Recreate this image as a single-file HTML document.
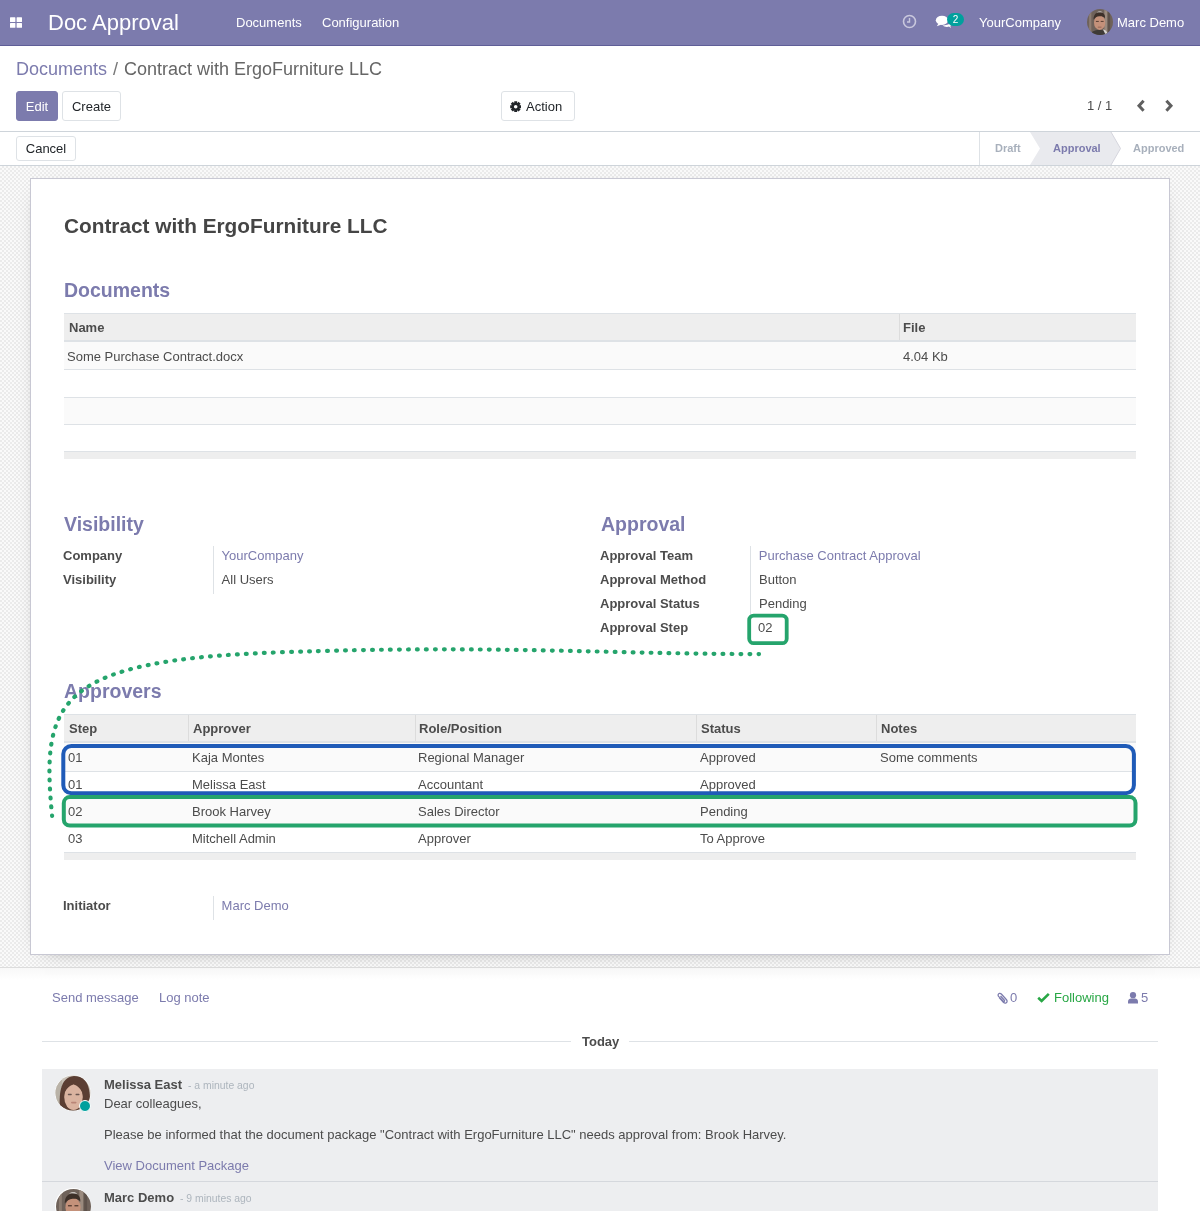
<!DOCTYPE html>
<html><head><meta charset="utf-8">
<style>
*{box-sizing:border-box;margin:0;padding:0}
html,body{width:1200px;height:1211px;overflow:hidden;background:#fff}
body{font-family:"Liberation Sans",sans-serif;font-size:13px;color:#4c4c4c;position:relative}
.abs{position:absolute;white-space:nowrap}
#nav{position:absolute;left:0;top:0;width:1200px;height:46px;background:#7c7bad;border-bottom:1px solid #5f5e97}
#nav .t{position:absolute;color:#fff;white-space:nowrap}
.btn{position:absolute;border:1px solid #dee2e6;border-radius:3px;background:#fff;color:#212529;font-size:13px;text-align:center;white-space:nowrap}
.sep{position:absolute;height:1px;background:#d9d9e1}
#bg{position:absolute;left:0;top:166px;width:1200px;height:801px;
background-color:#fafafa;
background-image:linear-gradient(45deg,#ebebeb 25%,transparent 25%,transparent 75%,#ebebeb 75%),linear-gradient(45deg,#ebebeb 25%,transparent 25%,transparent 75%,#ebebeb 75%);
background-size:4px 4px;background-position:0 0,2px 2px}
#sheet{position:absolute;left:30px;top:178px;width:1140px;height:777px;background:#fff;border:1px solid #c8c8d3;box-shadow:0 5px 20px -15px rgba(0,0,0,0.7)}
.h2{position:absolute;font-size:19.5px;font-weight:bold;color:#7c7bad;white-space:nowrap}
.lbl{position:absolute;font-weight:bold;color:#4c4c4c;white-space:nowrap}
.val{position:absolute;white-space:nowrap}
.link{color:#7c7bad}
.vline{position:absolute;width:1px;background:#dee2e6}
.tbl{position:absolute}
.hrow{position:absolute;left:0;height:29px;background:#eee;border-top:1px solid #dee2e6;border-bottom:2px solid #dee2e6}
.row{position:absolute;left:0;border-bottom:1px solid #dee2e6}
.cell{position:absolute;white-space:nowrap}
.th{position:absolute;font-weight:bold;white-space:nowrap;color:#4c4c4c}
</style></head><body>
<div id="root" style="position:absolute;left:0;top:0;width:1200px;height:1211px;will-change:transform">

<div id="nav">
  <svg class="abs" style="left:10px;top:16.5px" width="12" height="11" viewBox="0 0 12 11"><rect x="0" y="0.3" width="5.4" height="4.7" rx="0.5" fill="#fff"/><rect x="6.6" y="0.3" width="5.4" height="4.7" rx="0.5" fill="#fff"/><rect x="0" y="6" width="5.4" height="4.7" rx="0.5" fill="#fff"/><rect x="6.6" y="6" width="5.4" height="4.7" rx="0.5" fill="#fff"/></svg>
  <div class="t" style="left:48px;top:10px;font-size:22px">Doc Approval</div>
  <div class="t" style="left:236px;top:15px">Documents</div>
  <div class="t" style="left:322px;top:15px">Configuration</div>
  <svg class="abs" style="left:902px;top:14px" width="15" height="15" viewBox="0 0 15 15"><circle cx="7.5" cy="7.5" r="6" fill="none" stroke="#c9c8dd" stroke-width="1.6"/><path d="M7.5 4v4h-2.5" fill="none" stroke="#c9c8dd" stroke-width="1.4"/></svg>
  <svg class="abs" style="left:935px;top:14px" width="18" height="16" viewBox="0 0 18 16"><ellipse cx="7" cy="6.3" rx="6.2" ry="4.6" fill="#fff"/><path d="M3.5 9.5 L1.8 12.3 L6.5 10.5z" fill="#fff"/><path d="M7.5 11.6 C9 12.8 12 13.2 14 12.6 L16 14 L15.3 12 C16.5 11.2 16.8 10 16.5 9 C14 10.5 10.5 11.3 7.5 11.6Z" fill="#fff"/></svg>
  <div class="abs" style="left:947px;top:12.5px;width:17px;height:13.5px;border-radius:7px;background:#00a09d;color:#fff;font-size:10px;text-align:center;line-height:13.5px">2</div>
  <div class="t" style="left:979px;top:15px">YourCompany</div>
  <div class="abs" style="left:1087px;top:9px;width:26px;height:26px"><svg viewBox="0 0 36 36" width="100%" height="100%"><defs><clipPath id="cl1"><circle cx="18" cy="18" r="18"/></clipPath></defs><g clip-path="url(#cl1)">
<rect width="36" height="36" fill="#6f625a"/><rect x="24" y="0" width="4" height="36" fill="#9a8a7e"/><rect x="29" y="0" width="3" height="36" fill="#5e524b"/><rect x="3" y="0" width="3" height="36" fill="#8c7d72"/>
<path d="M5 36 C6 31 10 29 17 29 C24 29 28 31 30 36Z" fill="#3e3a36"/><path d="M22 28 L26 36 L29 36 C28 31 26 29 22 28Z" fill="#d8d6d2"/>
<ellipse cx="17.5" cy="19" rx="7.8" ry="10" fill="#c4917a"/>
<path d="M9 15 C9 7 13 4.5 17.5 4.5 C22 4.5 25.5 7 25 13 C23 10 20 9.8 17 10 C13.5 10.3 11 12 9 15Z" fill="#3d3029"/>
<path d="M13.5 4.8 C15.5 2.8 20.5 2.8 22 5 C19 4.2 16 4.2 13.5 4.8Z" fill="#e2e0de"/>
<rect x="12.3" y="16.5" width="4" height="1.4" fill="#5a4035"/><rect x="19" y="16.5" width="4" height="1.4" fill="#5a4035"/><rect x="15" y="24.5" width="5" height="1.2" fill="#8e5f50"/>
</g></svg></div>
  <div class="t" style="left:1117px;top:15px">Marc Demo</div>
</div>

<!-- control panel -->
<div class="abs" style="left:16px;top:59px;font-size:18px;color:#7c7bad">Documents</div>
<div class="abs" style="left:113px;top:59px;font-size:18px;color:#777">/</div>
<div class="abs" style="left:124px;top:59px;font-size:18px;color:#666">Contract with ErgoFurniture LLC</div>
<div class="btn" style="left:16px;top:91px;width:42px;height:30px;line-height:30px;background:#7c7bad;border-color:#7c7bad;color:#fff">Edit</div>
<div class="btn" style="left:62px;top:91px;width:59px;height:30px;line-height:30px">Create</div>
<div class="btn" style="left:501px;top:91px;width:74px;height:30px"></div>
<svg class="abs" style="left:510px;top:100.8px" width="11.4" height="11.4" viewBox="0 0 12 12"><path fill-rule="evenodd" d="M10.12 4.45 L11.80 4.46 L11.80 7.54 L10.12 7.55 L10.01 7.82 L11.19 9.01 L9.01 11.19 L7.82 10.01 L7.55 10.12 L7.54 11.80 L4.46 11.80 L4.45 10.12 L4.18 10.01 L2.99 11.19 L0.81 9.01 L1.99 7.82 L1.88 7.55 L0.20 7.54 L0.20 4.46 L1.88 4.45 L1.99 4.18 L0.81 2.99 L2.99 0.81 L4.18 1.99 L4.45 1.88 L4.46 0.20 L7.54 0.20 L7.55 1.88 L7.82 1.99 L9.01 0.81 L11.19 2.99 L10.01 4.18ZM7.9 6 A1.9 1.9 0 1 0 4.1 6 A1.9 1.9 0 1 0 7.9 6Z" fill="#212529"/></svg>
<div class="abs" style="left:526px;top:99px;color:#212529">Action</div>
<div class="abs" style="left:1087px;top:98px;color:#4c4c4c">1 / 1</div>
<svg class="abs" style="left:1136px;top:99px" width="10" height="14" viewBox="0 0 10 14"><path d="M7.6 1.8 L3 6.8 L7.6 11.8" fill="none" stroke="#5f5f5f" stroke-width="3"/></svg>
<svg class="abs" style="left:1164px;top:99px" width="10" height="14" viewBox="0 0 10 14"><path d="M2.4 1.8 L7 6.8 L2.4 11.8" fill="none" stroke="#5f5f5f" stroke-width="3"/></svg>
<div class="sep" style="left:0;top:131px;width:1200px;background:#ced4da"></div>

<!-- statusbar -->
<div class="btn" style="left:16px;top:136px;width:60px;height:25px;line-height:24px">Cancel</div>
<div class="abs" style="left:979px;top:132px;width:1px;height:33px;background:#dee2e6"></div>
<svg class="abs" style="left:1030px;top:132px" width="91" height="33" viewBox="0 0 91 33"><path d="M0 0 H81 L90.5 16.5 L81 33 H0 L10 16.5z" fill="#e9eaee"/><path d="M81 0 L90.5 16.5 L81 33" fill="none" stroke="#d5d5dd" stroke-width="1"/></svg>
<div class="abs" style="left:995px;top:142px;font-size:11px;font-weight:bold;color:#a8b0bc">Draft</div>
<div class="abs" style="left:1053px;top:142px;font-size:11px;font-weight:bold;color:#7c7bad">Approval</div>
<div class="abs" style="left:1133px;top:142px;font-size:11px;font-weight:bold;color:#a8b0bc">Approved</div>

<div id="bg"></div>
<div class="sep" style="left:0;top:165px;width:1200px;background:#ced4da"></div>
<div class="sep" style="left:0;top:967px;width:1200px;background:#dcdcdc"></div>
<div class="abs" style="left:0;top:968px;width:1200px;height:12px;background:linear-gradient(#f8f8f8,#fff)"></div>

<div id="sheet"></div>
<!-- sheet content -->
<div class="abs" style="left:64px;top:214px;font-size:20.8px;font-weight:bold;color:#454545">Contract with ErgoFurniture LLC</div>
<div class="h2" style="left:64px;top:279px">Documents</div>

<!-- documents table -->
<div class="abs" style="left:64px;top:313px;width:1072px;height:29px;background:#eee;border-top:1px solid #dee2e6;border-bottom:2px solid #dee2e6"></div>
<div class="abs" style="left:899px;top:314px;width:1px;height:26px;background:#dcdcdc"></div>
<div class="th" style="left:69px;top:320px">Name</div>
<div class="th" style="left:903px;top:320px">File</div>
<div class="abs" style="left:64px;top:342px;width:1072px;height:28px;background:#fafafa;border-bottom:1px solid #dee2e6"></div>
<div class="cell" style="left:67px;top:349px">Some Purchase Contract.docx</div>
<div class="cell" style="left:903px;top:349px">4.04 Kb</div>
<div class="abs" style="left:64px;top:370px;width:1072px;height:28px;background:#fff;border-bottom:1px solid #dee2e6"></div>
<div class="abs" style="left:64px;top:398px;width:1072px;height:27px;background:#fafafa;border-bottom:1px solid #dee2e6"></div>
<div class="abs" style="left:64px;top:425px;width:1072px;height:27px;background:#fff;border-bottom:1px solid #dee2e6"></div>
<div class="abs" style="left:64px;top:452px;width:1072px;height:7px;background:#eee"></div>

<!-- visibility -->
<div class="h2" style="left:64px;top:513px">Visibility</div>
<div class="lbl" style="left:63px;top:548px">Company</div>
<div class="lbl" style="left:63px;top:572px">Visibility</div>
<div class="vline" style="left:213px;top:546px;height:48px"></div>
<div class="val link" style="left:221.6px;top:548px">YourCompany</div>
<div class="val" style="left:221.6px;top:572px">All Users</div>

<!-- approval -->
<div class="h2" style="left:601px;top:513px">Approval</div>
<div class="lbl" style="left:600px;top:548px">Approval Team</div>
<div class="lbl" style="left:600px;top:572px">Approval Method</div>
<div class="lbl" style="left:600px;top:596px">Approval Status</div>
<div class="lbl" style="left:600px;top:620px">Approval Step</div>
<div class="vline" style="left:750px;top:546px;height:96px"></div>
<div class="val link" style="left:758.8px;top:548px">Purchase Contract Approval</div>
<div class="val" style="left:759px;top:572px">Button</div>
<div class="val" style="left:759px;top:596px">Pending</div>
<div class="val" style="left:758px;top:620px">02</div>

<!-- approvers -->
<div class="h2" style="left:64px;top:680px">Approvers</div>
<div class="abs" style="left:64px;top:714px;width:1072px;height:29px;background:#eee;border-top:1px solid #dee2e6;border-bottom:2px solid #dee2e6"></div>
<div class="abs" style="left:188px;top:715px;width:1px;height:26px;background:#dcdcdc"></div>
<div class="abs" style="left:415px;top:715px;width:1px;height:26px;background:#dcdcdc"></div>
<div class="abs" style="left:696px;top:715px;width:1px;height:26px;background:#dcdcdc"></div>
<div class="abs" style="left:876px;top:715px;width:1px;height:26px;background:#dcdcdc"></div>
<div class="th" style="left:69px;top:721px">Step</div>
<div class="th" style="left:193px;top:721px">Approver</div>
<div class="th" style="left:419px;top:721px">Role/Position</div>
<div class="th" style="left:701px;top:721px">Status</div>
<div class="th" style="left:881px;top:721px">Notes</div>
<div class="abs" style="left:64px;top:743px;width:1072px;height:29px;background:#fafafa;border-bottom:1px solid #dee2e6"></div>
<div class="abs" style="left:64px;top:772px;width:1072px;height:26px;background:#fff;border-bottom:1px solid #dee2e6"></div>
<div class="abs" style="left:64px;top:798px;width:1072px;height:27px;background:#fafafa;border-bottom:1px solid #dee2e6"></div>
<div class="abs" style="left:64px;top:825px;width:1072px;height:28px;background:#fff;border-bottom:1px solid #dee2e6"></div>
<div class="abs" style="left:64px;top:853px;width:1072px;height:7px;background:#eee"></div>
<div class="cell" style="left:68px;top:750px">01</div><div class="cell" style="left:192px;top:750px">Kaja Montes</div><div class="cell" style="left:418px;top:750px">Regional Manager</div><div class="cell" style="left:700px;top:750px">Approved</div><div class="cell" style="left:880px;top:750px">Some comments</div>
<div class="cell" style="left:68px;top:777px">01</div><div class="cell" style="left:192px;top:777px">Melissa East</div><div class="cell" style="left:418px;top:777px">Accountant</div><div class="cell" style="left:700px;top:777px">Approved</div>
<div class="cell" style="left:68px;top:804px">02</div><div class="cell" style="left:192px;top:804px">Brook Harvey</div><div class="cell" style="left:418px;top:804px">Sales Director</div><div class="cell" style="left:700px;top:804px">Pending</div>
<div class="cell" style="left:68px;top:831px">03</div><div class="cell" style="left:192px;top:831px">Mitchell Admin</div><div class="cell" style="left:418px;top:831px">Approver</div><div class="cell" style="left:700px;top:831px">To Approve</div>

<!-- initiator -->
<div class="lbl" style="left:63px;top:898px">Initiator</div>
<div class="vline" style="left:213px;top:896px;height:24px"></div>
<div class="val link" style="left:221.6px;top:898px">Marc Demo</div>

<!-- annotations -->
<svg class="abs" style="left:0;top:0" width="1200" height="1211" viewBox="0 0 1200 1211">
  <rect x="63.3" y="746" width="1070.6" height="47.2" rx="8" fill="none" stroke="#1f5bb8" stroke-width="4"/>
  <rect x="63.8" y="797.1" width="1071.7" height="28.4" rx="6" fill="none" stroke="#25a46c" stroke-width="4"/>
  <rect x="749.2" y="615.6" width="37.5" height="27.6" rx="4.5" fill="none" stroke="#25a46c" stroke-width="3.8"/>
  <path d="M759.0 654.1 C603.9 653.9 491.2 644.8 279.8 652.3 C56.1 660.1 40.9 701.0 52.1 815.9" fill="none" stroke="#25a46c" stroke-width="4.2" stroke-linecap="round" stroke-dasharray="0.8 8.1948" stroke-dashoffset="0.4"/>
</svg>

<!-- chatter -->
<div class="abs" style="left:52px;top:990px;color:#7c7bad">Send message</div>
<div class="abs" style="left:159px;top:990px;color:#7c7bad">Log note</div>
<svg class="abs" style="left:996px;top:992px" width="12" height="13" viewBox="0 0 12 13"><g transform="translate(12,0) scale(-1,1)"><path d="M8.8 5.6 L4.6 10.2 C3.1 11.8 0.9 11.2 0.9 9.3 C0.9 8.5 1.3 7.9 1.9 7.3 L6.7 2 C7.7 1 9.6 1.3 9.9 2.8 C10 3.5 9.7 4.1 9.2 4.6 L4.8 9.3 C4.3 9.8 3.4 9.6 3.4 8.8 C3.4 8.5 3.6 8.2 3.8 8 L7.5 4" fill="none" stroke="#7c7bad" stroke-width="1.3"/></g></svg>
<div class="abs" style="left:1010px;top:990px;color:#7c7bad">0</div>
<svg class="abs" style="left:1037px;top:991.5px" width="13" height="11" viewBox="0 0 13 11"><path d="M1.2 5.8 L4.6 9 L11.8 1.8" fill="none" stroke="#28a745" stroke-width="2.6"/></svg>
<div class="abs" style="left:1054px;top:990px;color:#28a745">Following</div>
<svg class="abs" style="left:1128px;top:992px" width="10" height="12" viewBox="0 0 10 12"><circle cx="5" cy="3.2" r="3.1" fill="#7c7bad"/><path d="M0 11.5 V9.6 C0 7.5 1.5 6.6 3 6.6 H7 C8.5 6.6 10 7.5 10 9.6 V11.5z" fill="#7c7bad"/></svg>
<div class="abs" style="left:1141px;top:990px;color:#7c7bad">5</div>

<div class="abs" style="left:42px;top:1041px;width:529px;height:1px;background:#dee2e6"></div>
<div class="abs" style="left:582px;top:1034px;font-weight:bold;color:#4c4c4c">Today</div>
<div class="abs" style="left:629px;top:1041px;width:529px;height:1px;background:#dee2e6"></div>

<div class="abs" style="left:42px;top:1069px;width:1116px;height:142px;background:#edeef0"></div>
<div class="abs" style="left:42px;top:1181px;width:1116px;height:1px;background:#d5d8dd"></div>
<div class="abs" style="left:55px;top:1075px;width:36px;height:36px"><svg viewBox="0 0 36 36" width="100%" height="100%"><defs><clipPath id="clm"><circle cx="18" cy="18" r="17.5"/></clipPath></defs><circle cx="18" cy="18" r="18" fill="#fff"/><g clip-path="url(#clm)">
<rect width="36" height="36" fill="#c9c2b8"/><rect x="0" y="0" width="7" height="36" fill="#b9b2a7"/>
<path d="M5 36 C4 22 4 2 19 1 C33 1 35 14 35 26 L35 36Z" fill="#5b3e33"/>
<ellipse cx="18.5" cy="22" rx="9.3" ry="13" fill="#dab3a0"/>
<path d="M8.5 20 C9 10 13 6.5 18 6 L18.6 9.5 C14 10.5 11 14 8.5 20Z" fill="#5b3e33"/><path d="M28.5 20 C28 10 24 6.5 19.2 6 L18.6 9.5 C23 10.5 26 14 28.5 20Z" fill="#5b3e33"/>
<path d="M5 36 L10 36 C9 30 8.5 24 9.2 18 L6 18Z" fill="#5b3e33"/><path d="M31 31 L26 31 C28 27 28.5 22 27.8 18 L31 18Z" fill="#5b3e33"/>
<rect x="12.8" y="18.8" width="4" height="1.4" rx="0.6" fill="#6a5650"/><rect x="20.5" y="18.8" width="4" height="1.4" rx="0.6" fill="#6a5650"/>
<rect x="16" y="26.8" width="5.5" height="1.6" rx="0.8" fill="#b98577"/>
</g></svg></div>
<div class="abs" style="left:79px;top:1099.5px;width:12px;height:12px;border-radius:50%;background:#00a09d;border:1.5px solid #fff"></div>
<div class="abs" style="left:104px;top:1077px;font-weight:bold;color:#4c4c4c">Melissa East</div>
<div class="abs" style="left:188px;top:1080px;font-size:10.4px;color:#adb5bd">- a minute ago</div>
<div class="abs" style="left:104px;top:1096px">Dear colleagues,</div>
<div class="abs" style="left:104px;top:1127px">Please be informed that the document package "Contract with ErgoFurniture LLC" needs approval from: Brook Harvey.</div>
<div class="abs" style="left:104px;top:1158px;color:#7c7bad">View Document Package</div>
<div class="abs" style="left:55px;top:1188px;width:36px;height:36px;border-radius:50%;background:#fff;padding:0.5px"><svg viewBox="0 0 36 36" width="100%" height="100%"><defs><clipPath id="cl2"><circle cx="18" cy="18" r="18"/></clipPath></defs><g clip-path="url(#cl2)">
<rect width="36" height="36" fill="#6f625a"/><rect x="24" y="0" width="4" height="36" fill="#9a8a7e"/><rect x="29" y="0" width="3" height="36" fill="#5e524b"/><rect x="3" y="0" width="3" height="36" fill="#8c7d72"/>
<path d="M5 36 C6 31 10 29 17 29 C24 29 28 31 30 36Z" fill="#3e3a36"/><path d="M22 28 L26 36 L29 36 C28 31 26 29 22 28Z" fill="#d8d6d2"/>
<ellipse cx="17.5" cy="19" rx="7.8" ry="10" fill="#c4917a"/>
<path d="M9 15 C9 7 13 4.5 17.5 4.5 C22 4.5 25.5 7 25 13 C23 10 20 9.8 17 10 C13.5 10.3 11 12 9 15Z" fill="#3d3029"/>
<path d="M13.5 4.8 C15.5 2.8 20.5 2.8 22 5 C19 4.2 16 4.2 13.5 4.8Z" fill="#e2e0de"/>
<rect x="12.3" y="16.5" width="4" height="1.4" fill="#5a4035"/><rect x="19" y="16.5" width="4" height="1.4" fill="#5a4035"/><rect x="15" y="24.5" width="5" height="1.2" fill="#8e5f50"/>
</g></svg></div>
<div class="abs" style="left:104px;top:1190px;font-weight:bold;color:#4c4c4c">Marc Demo</div>
<div class="abs" style="left:180px;top:1193px;font-size:10.4px;color:#adb5bd">- 9 minutes ago</div>

</div>
</body></html>
